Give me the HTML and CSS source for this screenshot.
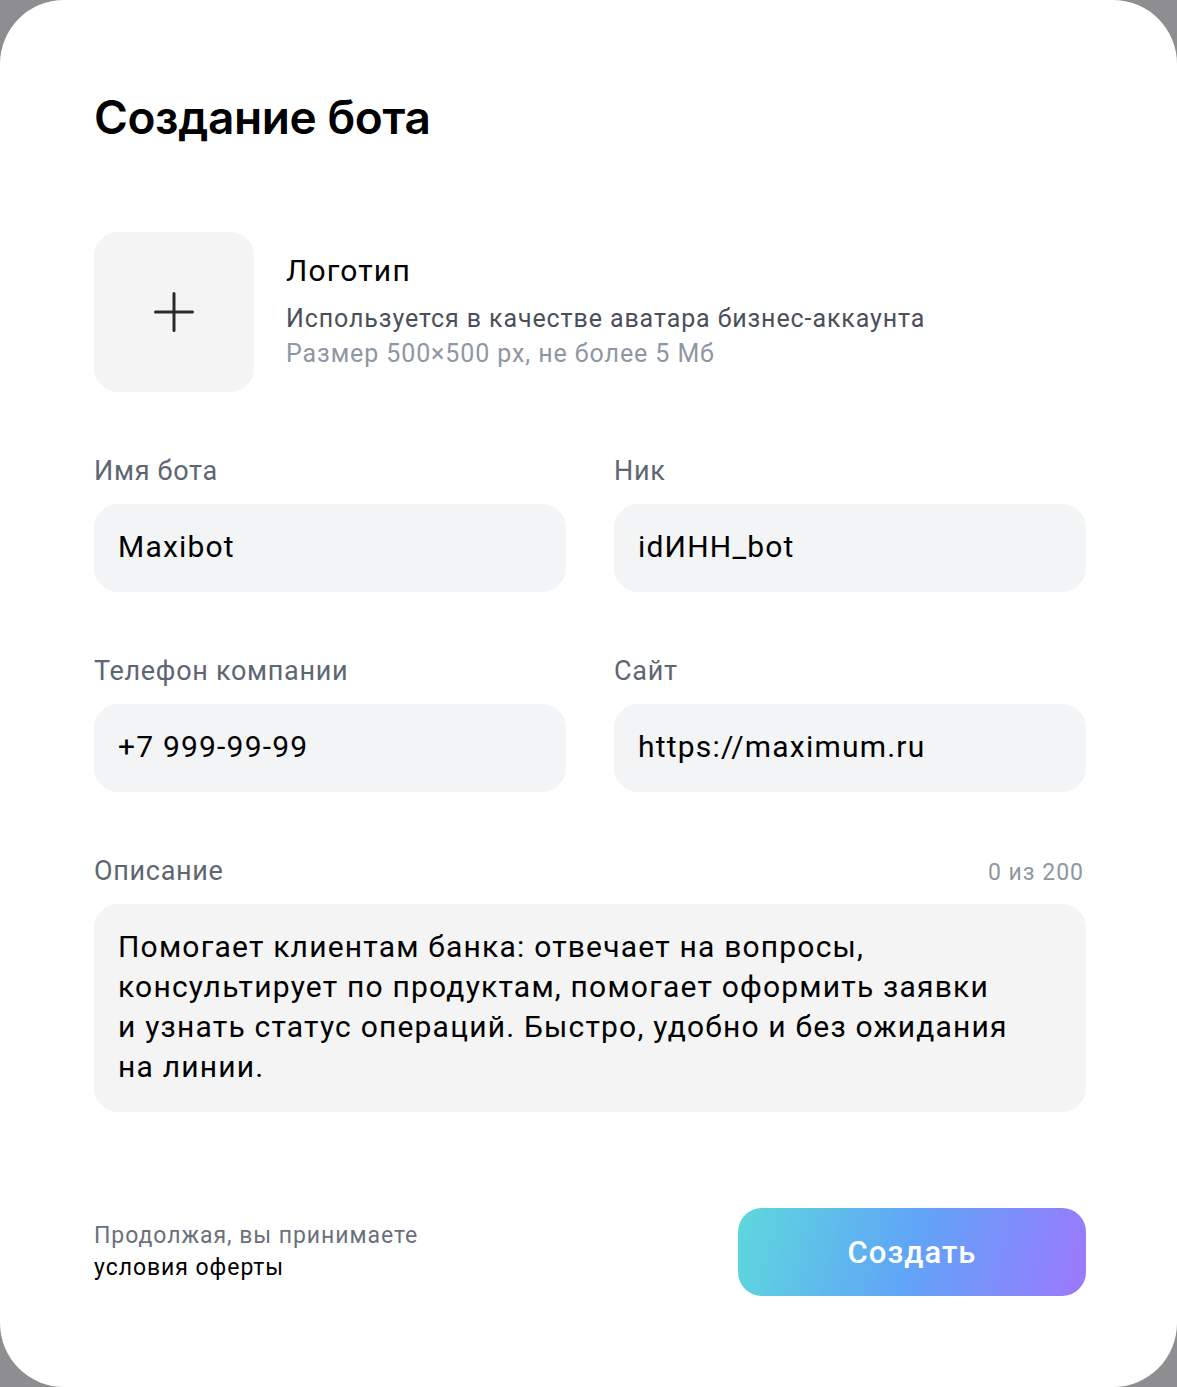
FILE: index.html
```html
<!DOCTYPE html>
<html lang="ru">
<head>
    <meta charset="UTF-8">
    <meta name="viewport" content="width=device-width, initial-scale=1.0">
    <title>Создание бота</title>
    <link rel="stylesheet" href="styles.css">
</head>
<body>
    <div class="modal">
        <h1 class="modal-title">Создание бота</h1>

        <div class="logo-row">
            <button class="logo-upload" type="button" aria-label="Загрузить логотип">
                <svg width="40" height="40" viewBox="0 0 40 40" fill="none">
                    <path d="M20 1.5V38.5M1.5 20H38.5" stroke="#2a2a2c" stroke-width="3" stroke-linecap="round"/>
                </svg>
            </button>
            <div class="logo-info">
                <div class="logo-title">Логотип</div>
                <div class="logo-desc">Используется в качестве аватара бизнес-аккаунта</div>
                <div class="logo-hint">Размер 500×500 px, не более 5 Мб</div>
            </div>
        </div>

        <div class="form-grid">
            <div class="form-group">
                <label class="form-label" for="name">Имя бота</label>
                <input class="form-input" id="name" type="text" value="Maxibot">
            </div>
            <div class="form-group">
                <label class="form-label" for="nick">Ник</label>
                <input class="form-input" id="nick" type="text" value="idИНН_bot">
            </div>
            <div class="form-group">
                <label class="form-label" for="phone">Телефон компании</label>
                <input class="form-input" id="phone" type="text" value="+7 999-99-99">
            </div>
            <div class="form-group">
                <label class="form-label" for="site">Сайт</label>
                <input class="form-input" id="site" type="text" value="https://maximum.ru">
            </div>
            <div class="form-group wide">
                <div class="label-row">
                    <label class="form-label" for="desc">Описание</label>
                    <span class="counter">0 из 200</span>
                </div>
                <textarea class="form-textarea" id="desc" rows="4">Помогает клиентам банка: отвечает на вопросы,
консультирует по продуктам, помогает оформить заявки
и узнать статус операций. Быстро, удобно и без ожидания
на линии.</textarea>
            </div>
        </div>

        <div class="modal-footer">
            <div class="terms">
                <div class="terms-note">Продолжая, вы принимаете</div>
                <a class="terms-link" href="#">условия оферты</a>
            </div>
            <button class="btn-create" type="button">Создать</button>
        </div>
    </div>
</body>
</html>
```

FILE: styles.css
```css
body {
    margin: 0;
    background-color: #8e8e90;
    font-family: Roboto, "Liberation Sans", sans-serif;
    color: #000;
}

.modal {
    box-sizing: border-box;
    height: 1387px;
    background-color: #fff;
    border-radius: 64px;
    padding: 89px 91px 0 94px;
}

.modal-title {
    margin: 0 0 87px;
    font-family: Inter, "Noto Sans", sans-serif;
    font-size: 46px;
    line-height: 56px;
    font-weight: 600;
    letter-spacing: -0.4px;
}

.logo-row {
    display: flex;
    align-items: center;
    gap: 32px;
}

.logo-upload {
    width: 160px;
    height: 160px;
    flex-shrink: 0;
    display: flex;
    align-items: center;
    justify-content: center;
    background-color: #f4f4f4;
    border: none;
    border-radius: 24px;
    padding: 0;
    cursor: pointer;
}

.logo-title {
    font-size: 30px;
    line-height: 36px;
    letter-spacing: 1.2px;
    margin-bottom: 12px;
}

.logo-desc,
.logo-hint {
    font-size: 25px;
    line-height: 35px;
    letter-spacing: 0.9px;
}

.logo-desc {
    color: #4b5058;
}

.logo-hint {
    color: #8f97a2;
}

.form-grid {
    display: grid;
    grid-template-columns: 1fr 1fr;
    column-gap: 48px;
    row-gap: 63px;
    margin-top: 63px;
}

.form-group {
    display: flex;
    flex-direction: column;
    gap: 17px;
}

.form-group.wide {
    grid-column: 1 / -1;
}

.label-row {
    display: flex;
    justify-content: space-between;
    align-items: baseline;
}

.form-label {
    font-size: 27px;
    line-height: 32px;
    color: #5e6672;
    letter-spacing: 0.7px;
}

.counter {
    font-size: 23px;
    color: #8f97a2;
    letter-spacing: 1px;
    margin-right: 2px;
}

.form-input,
.form-textarea {
    box-sizing: border-box;
    width: 100%;
    border: none;
    border-radius: 24px;
    font-family: inherit;
    font-size: 30px;
    letter-spacing: 1.2px;
    color: #000;
    outline: none;
}

.form-input {
    height: 88px;
    padding: 0 24px 4px;
    background-color: #f3f4f6;
}

.form-textarea {
    height: 208px;
    padding: 23px 24px 25px;
    line-height: 40px;
    background-color: #f4f4f4;
    resize: none;
    overflow: hidden;
}

.modal-footer {
    display: flex;
    justify-content: space-between;
    align-items: center;
    margin-top: 96px;
}

.terms {
    font-size: 23px;
    line-height: 32px;
    letter-spacing: 0.95px;
}

.terms-note {
    color: #6a717c;
}

.terms-link {
    color: #000;
    text-decoration: none;
}

.btn-create {
    width: 348px;
    height: 88px;
    border: none;
    border-radius: 24px;
    background: linear-gradient(105deg, #5dd8dc 0%, #60a4f7 50%, #9c78fd 100%);
    color: #fff;
    font-family: inherit;
    font-size: 31px;
    font-weight: 500;
    letter-spacing: 1px;
    cursor: pointer;
}
```
